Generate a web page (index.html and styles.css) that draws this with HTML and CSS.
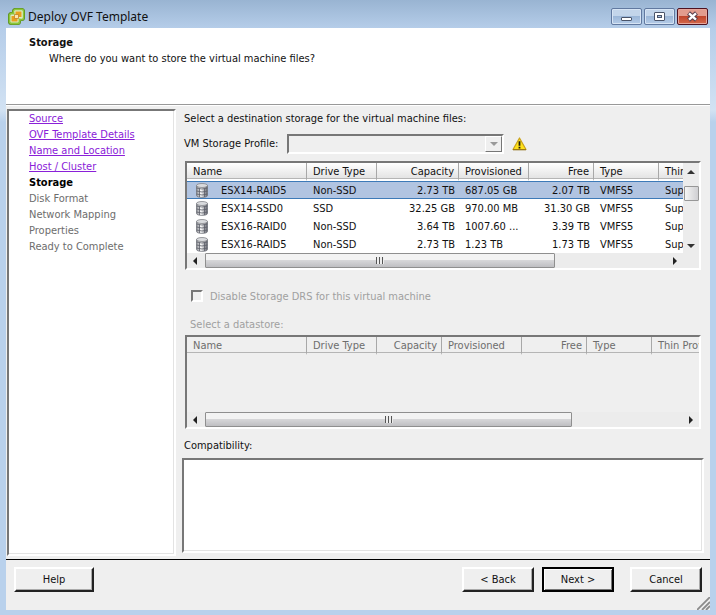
FILE: index.html
```html
<!DOCTYPE html>
<html lang="en">
<head>
    <meta charset="utf-8">
    <meta name="viewport" content="width=device-width, initial-scale=1.0">
    <title>Deploy OVF Template</title>
    <link rel="stylesheet" href="styles.css">
</head>
<body>

<!-- shared icons -->
<svg class="defs" width="0" height="0">
    <defs>
        <linearGradient id="metal" x1="0" x2="1" y1="0" y2="0">
            <stop offset="0" stop-color="#85888e"/>
            <stop offset="0.4" stop-color="#ffffff"/>
            <stop offset="1" stop-color="#5c5f68"/>
        </linearGradient>
        <symbol id="disk" viewBox="0 0 12 15">
            <path d="M0.5 2.5V12.5C0.5 15 11.5 15 11.5 12.5V2.5Z" fill="url(#metal)" stroke="#777a82" stroke-width="0.8"/>
            <path d="M0.5 5Q6 7 11.5 5M0.5 8Q6 10 11.5 8M0.5 11Q6 13 11.5 11" fill="none" stroke="#5d606a" stroke-width="0.8"/>
            <path d="M3.5 5.5V14M8.5 5.5V14" stroke="#5d606a" stroke-width="0.8"/>
            <ellipse cx="6" cy="2.5" rx="5.5" ry="2" fill="#d9dbde" stroke="#85878c" stroke-width="0.8"/>
        </symbol>
    </defs>
</svg>

<div class="window">
    <header class="titlebar">
        <svg class="app-icon" width="17" height="17" viewBox="0 0 17 17">
            <rect x="5.5" y="1.5" width="10" height="10" rx="2" fill="none" stroke="#4e8412" stroke-width="3"/>
            <rect x="1.5" y="5.5" width="10" height="10" rx="2" fill="none" stroke="#4e8412" stroke-width="3"/>
            <rect x="5.5" y="1.5" width="10" height="10" rx="2" fill="#dcebc4" stroke="#8cc63a" stroke-width="1.8"/>
            <rect x="1.5" y="5.5" width="10" height="10" rx="2" fill="#dcebc4" stroke="#8cc63a" stroke-width="1.8"/>
            <path d="M6.5 2.5H14.5V10.5H10.5V6.5H6.5Z" fill="#dcebc4"/>
            <rect x="7.5" y="3.5" width="6" height="5.5" fill="#e8a01c"/>
            <rect x="3.5" y="8" width="6" height="5.5" fill="#e8a01c"/>
            <path d="M6.5 6.5H10.5V10.5H6.5Z" fill="#fbe5b0" stroke="#b8791a" stroke-width="0.7"/>
        </svg>
        <h1>Deploy OVF Template</h1>
        <div class="controls">
            <button type="button" class="ctl" aria-label="Minimize">
                <svg width="13" height="11" viewBox="0 0 13 11"><rect x="1.5" y="6.5" width="10" height="3" rx="0.5" fill="#fff" stroke="#4a5469"/></svg>
            </button>
            <button type="button" class="ctl" aria-label="Maximize">
                <svg width="13" height="11" viewBox="0 0 13 11"><rect x="1.5" y="1.5" width="10" height="8" rx="0.5" fill="#fff" stroke="#4a5469"/><rect x="4.5" y="4.5" width="4" height="2" fill="#a9c3e3" stroke="#4a5469"/></svg>
            </button>
            <button type="button" class="ctl close" aria-label="Close">
                <svg width="13" height="11" viewBox="0 0 13 11"><path d="M2.5 2L10.5 9M10.5 2L2.5 9" stroke="#5a3f4c" stroke-width="4.4"/><path d="M3 2.4L10 8.6M10 2.4L3 8.6" stroke="#fff" stroke-width="2.4"/></svg>
            </button>
        </div>
    </header>

    <div class="client">
        <div class="banner">
            <h2>Storage</h2>
            <p>Where do you want to store the virtual machine files?</p>
        </div>

        <div class="content">
            <nav class="steps sunken">
                <ul>
                    <li><a href="#">Source</a></li>
                    <li><a href="#">OVF Template Details</a></li>
                    <li><a href="#">Name and Location</a></li>
                    <li><a href="#">Host / Cluster</a></li>
                    <li class="current">Storage</li>
                    <li>Disk Format</li>
                    <li>Network Mapping</li>
                    <li>Properties</li>
                    <li>Ready to Complete</li>
                </ul>
            </nav>

            <main class="main">
                <p class="intro">Select a destination storage for the virtual machine files:</p>
                <div class="profile">
                    <label for="profile">VM Storage Profile:</label>
                    <span class="combo sunken">
                        <select id="profile" disabled></select>
                        <span class="combo-btn"></span>
                    </span>
                    <svg class="warn" width="15" height="14" viewBox="0 0 15 14">
                        <path d="M7.5 1L14 12.5H1Z" fill="#ffe11a" stroke="#c9a21c" stroke-width="1.2" stroke-linejoin="round"/>
                        <path d="M1 12.8H14" stroke="#8a6a10" stroke-width="1"/>
                        <path d="M7.5 4.3V8.8M7.5 9.8V11.5" stroke="#1d1a10" stroke-width="1.8"/>
                    </svg>
                </div>

                <div class="grid sunken">
                    <div class="grid-body">
                        <div class="grid-view">
                            <table>
                                <colgroup><col class="w-name"><col class="w-drive"><col class="w-cap"><col class="w-prov"><col class="w-free"><col class="w-type"><col></colgroup>
                                <thead>
                                    <tr><th>Name</th><th>Drive Type</th><th class="num">Capacity</th><th>Provisioned</th><th class="num">Free</th><th>Type</th><th>Thin Provisioning</th></tr>
                                </thead>
                                <tbody>
                                    <tr class="selected"><td><span class="ds"><svg width="12" height="15"><use href="#disk"/></svg>ESX14-RAID5</span></td><td>Non-SSD</td><td class="num">2.73 TB</td><td>687.05 GB</td><td class="num">2.07 TB</td><td>VMFS5</td><td>Supported</td></tr>
                                    <tr><td><span class="ds"><svg width="12" height="15"><use href="#disk"/></svg>ESX14-SSD0</span></td><td>SSD</td><td class="num">32.25 GB</td><td>970.00 MB</td><td class="num">31.30 GB</td><td>VMFS5</td><td>Supported</td></tr>
                                    <tr><td><span class="ds"><svg width="12" height="15"><use href="#disk"/></svg>ESX16-RAID0</span></td><td>Non-SSD</td><td class="num">3.64 TB</td><td>1007.60 ...</td><td class="num">3.39 TB</td><td>VMFS5</td><td>Supported</td></tr>
                                    <tr><td><span class="ds"><svg width="12" height="15"><use href="#disk"/></svg>ESX16-RAID5</span></td><td>Non-SSD</td><td class="num">2.73 TB</td><td>1.23 TB</td><td class="num">1.73 TB</td><td>VMFS5</td><td>Supported</td></tr>
                                </tbody>
                            </table>
                        </div>
                        <div class="vscroll">
                            <i class="arrow up"></i>
                            <span class="vthumb"></span>
                            <i class="arrow down"></i>
                        </div>
                    </div>
                    <div class="hscroll with-corner">
                        <i class="arrow left"></i>
                        <div class="track"><span class="thumb thumb-a"><i class="grip"></i></span></div>
                        <i class="arrow right"></i>
                    </div>
                </div>

                <div class="drs">
                    <input type="checkbox" id="drs" disabled>
                    <label for="drs">Disable Storage DRS for this virtual machine</label>
                </div>
                <p class="ds-label">Select a datastore:</p>

                <div class="grid sunken disabled">
                    <div class="grid-view empty">
                        <table>
                            <colgroup><col class="w-name"><col class="w-drive"><col class="w-type"><col class="w-prov2"><col class="w-type"><col class="w-type"><col></colgroup>
                            <thead>
                                <tr><th>Name</th><th>Drive Type</th><th class="num">Capacity</th><th>Provisioned</th><th class="num">Free</th><th>Type</th><th>Thin Provisioning</th></tr>
                            </thead>
                        </table>
                    </div>
                    <div class="hscroll">
                        <i class="arrow left"></i>
                        <div class="track"><span class="thumb thumb-b"><i class="grip"></i></span></div>
                        <i class="arrow right"></i>
                    </div>
                </div>

                <label class="compat-label" for="compat">Compatibility:</label>
                <textarea class="compat sunken" id="compat" readonly></textarea>
            </main>
        </div>

        <footer class="footer">
            <button type="button" class="btn help">Help</button>
            <button type="button" class="btn">&lt; Back</button>
            <button type="button" class="btn default">Next &gt;</button>
            <button type="button" class="btn cancel">Cancel</button>
            <svg class="sizer" width="13" height="13" viewBox="0 0 13 13">
                <path d="M0 13L13 0M5 13L13 5M9 13L13 9" stroke="#8b8b8b" stroke-width="1.8"/>
            </svg>
        </footer>
    </div>
</div>

</body>
</html>
```
FILE: styles.css
```css
* {
    box-sizing: border-box;
}
body {
    margin: 0;
    font-family: Tahoma, "DejaVu Sans Condensed", "Noto Sans", sans-serif;
    font-size: 11px;
    line-height: 16px;
    color: #111;
}
h1, h2, p, ul {
    margin: 0;
    padding: 0;
}
.defs {
    position: absolute;
}
.window {
    min-height: 100vh;
    display: flex;
    flex-direction: column;
    padding: 0 6px 5px;
    background: linear-gradient(#99b4d2 0, #b5cde9 28px, #d2e2f3 110px, #b9d1ec 122px);
}
.titlebar {
    height: 28px;
    display: flex;
    align-items: center;
    padding: 4px 2px 0;
}
.titlebar h1 {
    flex: 1;
    margin-left: 3px;
    font: 12px "Noto Sans", sans-serif;
}
.controls {
    display: flex;
    gap: 2px;
    height: 17px;
}
.ctl {
    width: 31px;
    height: 17px;
    padding: 0;
    display: flex;
    align-items: center;
    justify-content: center;
    border: 1px solid #6179a0;
    border-radius: 2px;
    box-shadow: inset 0 0 0 1px #d6e4f4;
    background: linear-gradient(#c3d5ea 50%, #9cb7d8 50%, #b5cce8);
}
.close {
    border-color: #4e1220;
    box-shadow: inset 0 0 0 1px #e6a69b;
    background: linear-gradient(#e29c8e 50%, #c0462d 50%, #d4694c);
}
.client {
    flex: 1;
    display: flex;
    flex-direction: column;
    background: #efefef;
}
.banner {
    height: 77px;
    padding: 7px 23px;
    background: #fff;
    border-bottom: 1px solid #999;
}
.banner h2 {
    font-size: 11px;
}
.banner p {
    margin-left: 20px;
}
.sunken {
    border: 2px solid;
    border-color: #777 #fff #fff #777;
}
.content {
    flex: 1;
    display: flex;
    gap: 6px;
    padding: 3px 6px 3px 1px;
    border-top: 1px solid #fff;
    border-bottom: 1px solid #000;
}
.steps {
    width: 169px;
    padding-left: 20px;
    background: #fff;
    color: #6d6d6d;
    box-shadow: inset -1px -1px 0 #e3e3e3;
}
.steps ul {
    list-style: none;
}
.steps a {
    color: #8a20d8;
}
.steps .current {
    color: #000;
    font-weight: bold;
}
.main {
    flex: 1;
    min-width: 0;
    display: flex;
    flex-direction: column;
    padding-bottom: 3px;
}
.intro {
    margin: 2px 2px 6px;
}
.profile {
    display: flex;
    align-items: center;
    height: 22px;
    margin-left: 2px;
}
.profile label {
    width: 103px;
}
.combo {
    width: 217px;
    height: 20px;
    display: flex;
}
.combo select {
    flex: 1;
    min-width: 0;
    appearance: none;
    border: 0;
    background: #efefef;
}
.combo-btn {
    width: 17px;
    border: 1px solid;
    border-color: #fff #777 #777 #fff;
    display: flex;
    align-items: center;
    justify-content: center;
}
.combo-btn::after {
    content: "";
    border: 4px solid transparent;
    border-top-color: #999;
    border-bottom: 0;
}
.warn {
    margin-left: 8px;
}
.grid {
    margin: 6px 3px 0;
    background: #fff;
}
.grid-body {
    display: flex;
}
.grid-view {
    flex: 1;
    min-width: 0;
    overflow: hidden;
}
table {
    width: 100%;
    table-layout: fixed;
    border-collapse: separate;
    border-spacing: 0;
}
.w-name {
    width: 120px;
}
.w-drive, .w-prov {
    width: 70px;
}
.w-cap {
    width: 82px;
}
.w-free, .w-type {
    width: 65px;
}
.w-prov2 {
    width: 80px;
}
th, td {
    height: 18px;
    padding: 0 4px 0 6px;
    overflow: hidden;
    line-height: 15px;
    white-space: nowrap;
    text-align: left;
    font-weight: normal;
}
th {
    border-right: 1px solid #a8a8a8;
    border-bottom: 2px solid #fff;
    background: linear-gradient(#fff, #e2e2e2);
    box-shadow: inset 0 -1px 0 #b5b5b5;
}
th:last-child {
    border-right: 0;
}
.num {
    text-align: right;
}
.selected td {
    background: #b1c4e1;
    box-shadow: inset 0 1px 0 #3d7ab8, inset 0 -1px 0 #3d7ab8;
}
.ds {
    display: flex;
    align-items: center;
    gap: 13px;
    margin-left: 3px;
}
.vscroll {
    width: 16px;
    display: flex;
    flex-direction: column;
    align-items: center;
    padding: 7px 0 5px;
    background: #ececec;
}
.vthumb {
    width: 15px;
    height: 15px;
    margin: 12px 0 auto;
    border: 1px solid #979797;
    border-radius: 1px;
    background: linear-gradient(90deg, #f5f5f5, #cfcfd2);
}
.hscroll {
    display: flex;
    align-items: center;
    height: 15px;
    background: #ececec;
}
.with-corner {
    padding-right: 16px;
}
.track {
    flex: 1;
    margin: 0 7px 0 8px;
}
.thumb {
    display: flex;
    align-items: center;
    justify-content: center;
    height: 15px;
    border: 1px solid #8f8f8f;
    border-radius: 1px;
    background: linear-gradient(#f3f3f3 50%, #d6d6d8 50%, #bfbfc2);
}
.thumb-a {
    width: 76%;
}
.thumb-b {
    width: 77%;
}
.grip {
    width: 8px;
    height: 7px;
    background: repeating-linear-gradient(90deg, #555 0 1px, #eee 1px 3px);
}
.arrow {
    border: 4px solid transparent;
}
.up {
    border-bottom-color: #333;
    border-top: 0;
}
.down {
    border-top-color: #333;
    border-bottom: 0;
}
.left {
    margin-left: 6px;
    border-right-color: #222;
    border-left: 0;
}
.right {
    margin-right: 6px;
    border-left-color: #222;
    border-right: 0;
}
.drs {
    display: flex;
    align-items: center;
    gap: 7px;
    margin: 19px 0 0 9px;
    color: #a0a0a0;
}
.drs input {
    appearance: none;
    width: 12px;
    height: 12px;
    margin: 0 0 3px;
    border: 2px solid;
    border-color: #777 #fff #fff #777;
}
.ds-label {
    margin: 12px 8px 0;
    color: #a0a0a0;
}
.grid.disabled {
    margin-top: 2px;
    background: #efefef;
    color: #6d6d6d;
}
.disabled th {
    background: #efefef;
    border-bottom-color: #efefef;
}
.empty {
    height: 75px;
}
.compat-label {
    margin: 9px 2px 4px;
}
.compat {
    flex: 1;
    width: 100%;
    min-height: 60px;
    resize: none;
    background: #fff;
    box-shadow: inset -1px -1px 0 #e3e3e3;
    font: inherit;
    outline: 0;
}
.footer {
    position: relative;
    display: flex;
    gap: 8px;
    height: 50px;
    padding: 7px 8px 0;
}
.btn {
    width: 72px;
    height: 25px;
    padding: 0;
    border: 2px solid;
    border-color: #fff #222 #222 #fff;
    background: #efefef;
    box-shadow: inset -1px -1px 0 #aaa;
    color: #111;
    font: inherit;
}
.help {
    width: 80px;
    margin-right: auto;
}
.default {
    border-color: #000;
    box-shadow: inset 1px 1px 0 #fff, inset -1px -1px 0 #777;
}
.cancel {
    margin-left: 8px;
}
.sizer {
    position: absolute;
    right: 0;
    bottom: 0;
}
```
